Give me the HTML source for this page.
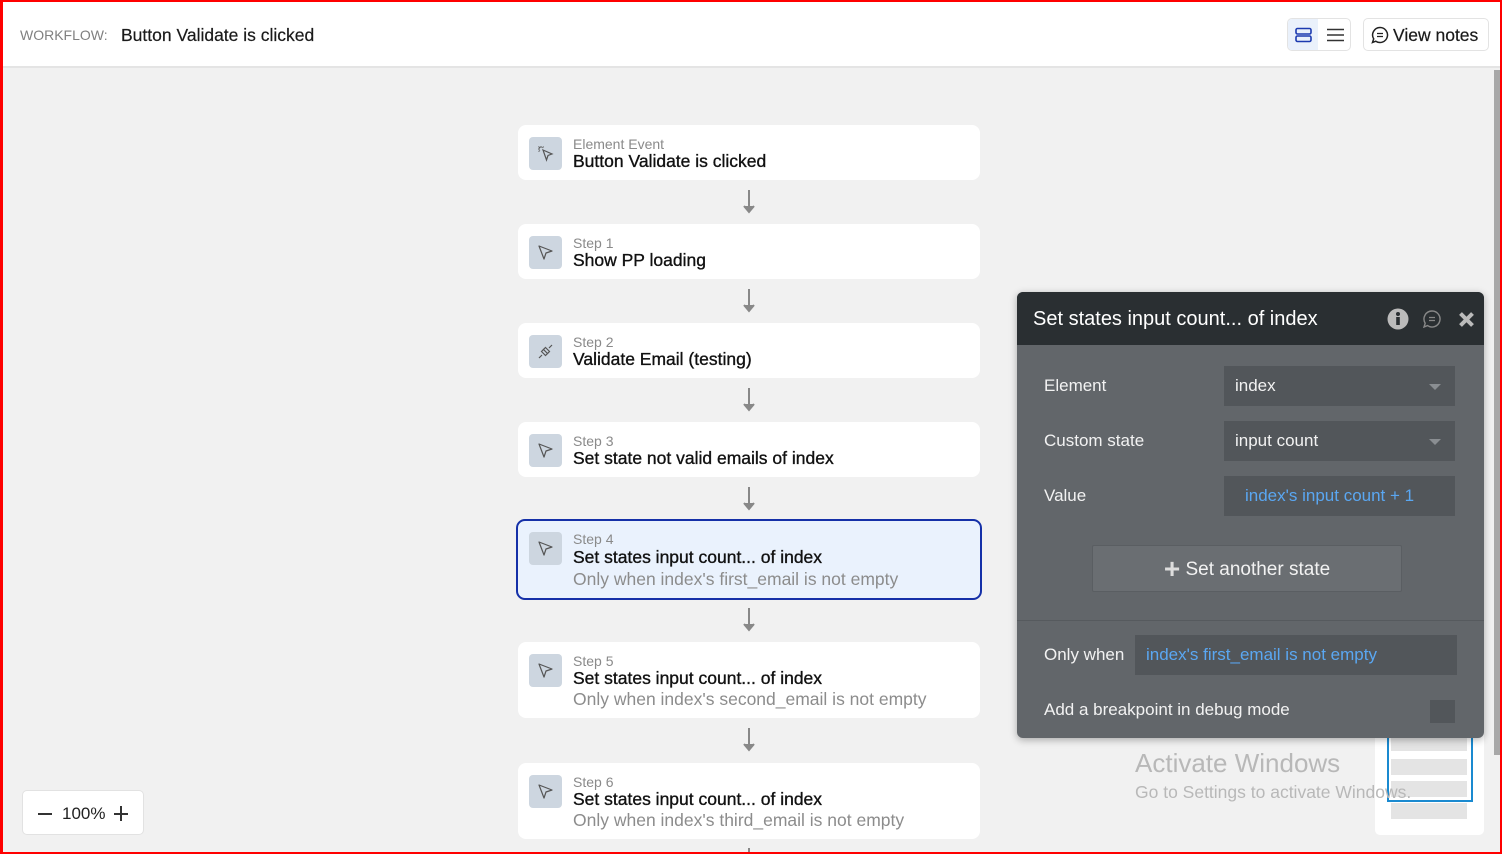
<!DOCTYPE html>
<html><head><style>
*{box-sizing:border-box;margin:0;padding:0}
body{width:1502px;height:854px;overflow:hidden;background:#f1f1f1;font-family:"Liberation Sans",sans-serif;position:relative}
.frame{position:absolute;inset:0;border:2px solid #f00;z-index:50;pointer-events:none;border-left-width:3px}
.hdr{position:absolute;left:0;top:0;width:1502px;height:68px;background:#fff;border-bottom:2px solid #e4e4e4}
.abs{position:absolute}
.card{position:absolute;left:518px;width:462px;background:#fff;border-radius:8px}
.ic{position:absolute;left:11px;top:12px;width:33px;height:33px;background:#cdd6e0;border-radius:4px}
.ic svg{position:absolute;left:8px;top:8px}
.lb{position:absolute;left:55px;top:11px;font-size:14px;color:#8a8a8a;line-height:16px}
.tt{position:absolute;left:55px;top:26px;font-size:17.5px;color:#111;line-height:20px;-webkit-text-stroke:0.35px #111}
.cd{position:absolute;left:55px;top:47px;font-size:17.5px;color:#8c8c8c;line-height:20px}
.arr{position:absolute;left:743px;width:12px}
.panel{position:absolute;left:1017px;top:292px;width:467px;height:446px;background:#62666a;border-radius:6px;box-shadow:0 2px 8px rgba(0,0,0,.3);overflow:hidden;z-index:10}
.ph{height:53px;background:#2a2f32;color:#fff;font-size:20px;padding:16px 0 0 16px}
.pl{position:absolute;left:27px;color:#f2f2f2;font-size:17px}
.fld{position:absolute;background:#52565a;color:#f2f2f2;font-size:17px;padding-left:11px;line-height:40px;height:40px}
.blue{color:#5aa7f2}
.tri{position:absolute;right:14px;top:18px;border:6px solid transparent;border-top:6px solid #8a8e92;border-bottom:0}
</style></head><body>
<div class="frame"></div>
<div class="hdr">
<div class="abs" style="left:20px;top:27px;font-size:14px;color:#808080">WORKFLOW:</div>
<div class="abs" style="left:121px;top:25px;font-size:17.5px;color:#1a1a1a;-webkit-text-stroke:0.2px #1a1a1a">Button Validate is clicked</div>
<div class="abs" style="left:1287px;top:18px;width:64px;height:33px;border:1px solid #e3e3e3;border-radius:5px;background:#fff">
<div class="abs" style="left:0;top:0;width:30px;height:31px;background:#eaf1fb;border-radius:4px 0 0 4px"></div>
<svg class="abs" style="left:7px;top:8px" width="17" height="16"><rect x="1" y="1.5" width="15" height="5.5" rx="1.5" fill="none" stroke="#1c3ab0" stroke-width="1.6"/><rect x="1" y="9" width="15" height="5.5" rx="1.5" fill="none" stroke="#1c3ab0" stroke-width="1.6"/></svg>
<svg class="abs" style="left:39px;top:9px" width="17" height="14"><path d="M0 1.5h17M0 7h17M0 12.5h17" stroke="#333" stroke-width="1.6"/></svg>
</div>
<div class="abs" style="left:1363px;top:18px;width:126px;height:33px;border:1px solid #e3e3e3;border-radius:5px;background:#fff">
<svg class="abs" style="left:7px;top:7px" width="18" height="18"><path d="M9 1.5a7.5 7.5 0 1 1-4.2 13.7L1.5 16.5l1.2-3.6A7.5 7.5 0 0 1 9 1.5z" fill="none" stroke="#222" stroke-width="1.5"/><path d="M6 7.5h6M6 10.5h6" stroke="#222" stroke-width="1.3"/></svg>
<div class="abs" style="left:29px;top:6px;font-size:17.5px;color:#1a1a1a;-webkit-text-stroke:0.2px #1a1a1a">View notes</div>
</div>
</div>
<div class="abs" style="left:1494px;top:70px;width:6px;height:685px;background:#a8a8a8"></div>

<div class="card" style="top:125px;height:55px"><div class="ic"><svg width="17" height="17"><path d="M6 5l9 4-4 1.5L9.5 15z" fill="none" stroke="#555" stroke-width="1.2"/><path d="M4 1v2M1 4h2M1.5 1.5l1.5 1.5M6.5 1.5L5.5 3M1.5 6.5L3 5.5" stroke="#555" stroke-width="1"/></svg></div><div class="lb">Element Event</div><div class="tt">Button Validate is clicked</div></div>
<div class="card" style="top:224px;height:55px"><div class="ic"><svg width="17" height="17"><path d="M2 2l13 5-6 2-2 6z" fill="none" stroke="#555" stroke-width="1.2" stroke-linejoin="round"/></svg></div><div class="lb">Step 1</div><div class="tt">Show PP loading</div></div>
<div class="card" style="top:323px;height:55px"><div class="ic"><svg width="17" height="17"><path d="M5 12l-3 3M12 5l3-3M6 6l5 5M4.5 8.5l4 4 2-2-4-4zM8.5 4.5l4 4-2 2-4-4z" fill="none" stroke="#555" stroke-width="1.2"/></svg></div><div class="lb">Step 2</div><div class="tt">Validate Email (testing)</div></div>
<div class="card" style="top:422px;height:55px"><div class="ic"><svg width="17" height="17"><path d="M2 2l13 5-6 2-2 6z" fill="none" stroke="#555" stroke-width="1.2" stroke-linejoin="round"/></svg></div><div class="lb">Step 3</div><div class="tt">Set state not valid emails of index</div></div>
<div class="card" style="top:519px;left:516px;width:466px;height:81px;background:#eaf2fd;border:2px solid #1530a8;border-radius:9px"><div class="ic" style="left:11px;top:11px"><svg width="17" height="17"><path d="M2 2l13 5-6 2-2 6z" fill="none" stroke="#555" stroke-width="1.2" stroke-linejoin="round"/></svg></div><div class="lb" style="left:55px;top:10px">Step 4</div><div class="tt" style="left:55px;top:26px">Set states input count... of index</div><div class="cd" style="left:55px;top:48px">Only when index's first_email is not empty</div></div>
<div class="card" style="top:642px;height:76px"><div class="ic"><svg width="17" height="17"><path d="M2 2l13 5-6 2-2 6z" fill="none" stroke="#555" stroke-width="1.2" stroke-linejoin="round"/></svg></div><div class="lb">Step 5</div><div class="tt">Set states input count... of index</div><div class="cd">Only when index's second_email is not empty</div></div>
<div class="card" style="top:763px;height:76px"><div class="ic"><svg width="17" height="17"><path d="M2 2l13 5-6 2-2 6z" fill="none" stroke="#555" stroke-width="1.2" stroke-linejoin="round"/></svg></div><div class="lb">Step 6</div><div class="tt">Set states input count... of index</div><div class="cd">Only when index's third_email is not empty</div></div>

<svg class="arr" style="top:190px" width="12" height="25"><path d="M6 0v22M1 16l5 6 5-6" fill="#888" stroke="#888" stroke-width="2"/></svg>
<svg class="arr" style="top:289px" width="12" height="25"><path d="M6 0v22M1 16l5 6 5-6" fill="#888" stroke="#888" stroke-width="2"/></svg>
<svg class="arr" style="top:388px" width="12" height="25"><path d="M6 0v22M1 16l5 6 5-6" fill="#888" stroke="#888" stroke-width="2"/></svg>
<svg class="arr" style="top:487px" width="12" height="25"><path d="M6 0v22M1 16l5 6 5-6" fill="#888" stroke="#888" stroke-width="2"/></svg>
<svg class="arr" style="top:608px" width="12" height="25"><path d="M6 0v22M1 16l5 6 5-6" fill="#888" stroke="#888" stroke-width="2"/></svg>
<svg class="arr" style="top:728px" width="12" height="25"><path d="M6 0v22M1 16l5 6 5-6" fill="#888" stroke="#888" stroke-width="2"/></svg>
<div class="abs" style="left:748px;top:848px;width:2px;height:6px;background:#888"></div>

<div class="abs" style="left:22px;top:790px;width:122px;height:45px;background:#fff;border:1px solid #e2e2e2;border-radius:5px">
<div class="abs" style="left:15px;top:22px;width:14px;height:1.6px;background:#333"></div>
<div class="abs" style="left:39px;top:13px;font-size:17px;color:#222">100%</div>
<div class="abs" style="left:91px;top:22px;width:14px;height:1.6px;background:#333"></div>
<div class="abs" style="left:97.2px;top:15px;width:1.6px;height:15px;background:#333"></div>
</div>

<div class="abs" style="left:1375px;top:725px;width:109px;height:110px;background:#fff;border-radius:5px"></div>
<div class="abs" style="left:1391px;top:735px;width:76px;height:16px;background:#e4e4e4"></div>
<div class="abs" style="left:1391px;top:759px;width:76px;height:16px;background:#e4e4e4"></div>
<div class="abs" style="left:1391px;top:781px;width:76px;height:16px;background:#e4e4e4"></div>
<div class="abs" style="left:1391px;top:803px;width:76px;height:16px;background:#e4e4e4"></div>
<div class="abs" style="left:1387px;top:728px;width:86px;height:74px;border:2px solid #1a8ad0;border-top:none"></div>
<div class="abs" style="left:1135px;top:748px;font-size:26px;color:#b8b8b8">Activate Windows</div>
<div class="abs" style="left:1135px;top:782px;font-size:17.5px;color:#b8b8b8">Go to Settings to activate Windows.</div>

<div class="panel">
<div class="ph">Set states input count... of index</div>
<svg class="abs" style="left:370px;top:16px" width="22" height="22"><circle cx="11" cy="11" r="10.5" fill="#bbb"/><rect x="9.2" y="9" width="3.6" height="8" fill="#2a2f32"/><circle cx="11" cy="6" r="2" fill="#2a2f32"/></svg>
<svg class="abs" style="left:406px;top:18px" width="18" height="18"><path d="M9 1a8 8 0 1 1-4.5 14.6L1 17l1.2-3.8A8 8 0 0 1 9 1z" fill="none" stroke="#888" stroke-width="1.4"/><path d="M6 7.5h6M6 10.5h6" stroke="#888" stroke-width="1.3"/></svg>
<svg class="abs" style="left:441px;top:19px" width="17" height="17"><path d="M2.5 2.5l12 12M14.5 2.5l-12 12" stroke="#bbb" stroke-width="4"/></svg>
<div class="pl" style="top:84px">Element</div>
<div class="fld" style="left:207px;top:74px;width:231px">index<span class="tri"></span></div>
<div class="pl" style="top:139px">Custom state</div>
<div class="fld" style="left:207px;top:129px;width:231px">input count<span class="tri"></span></div>
<div class="pl" style="top:194px">Value</div>
<div class="fld blue" style="left:207px;top:184px;width:231px;padding-left:21px">index's input count + 1</div>
<div class="abs" style="left:75px;top:253px;width:310px;height:47px;background:#6a6e72;border:1px solid #5a5e62;border-radius:2px;color:#f2f2f2;font-size:19px;text-align:center;line-height:45px"><span style="font-size:28px;vertical-align:-3px;color:#ddd;font-weight:bold">+</span> Set another state</div>
<div class="abs" style="left:0;top:328px;width:467px;height:1px;background:#565a5e"></div>
<div class="pl" style="top:353px">Only when</div>
<div class="fld blue" style="left:118px;top:343px;width:322px">index's first_email is not empty</div>
<div class="pl" style="top:408px">Add a breakpoint in debug mode</div>
<div class="abs" style="left:413px;top:408px;width:25px;height:23px;background:#52565a"></div>
</div>
</body></html>
